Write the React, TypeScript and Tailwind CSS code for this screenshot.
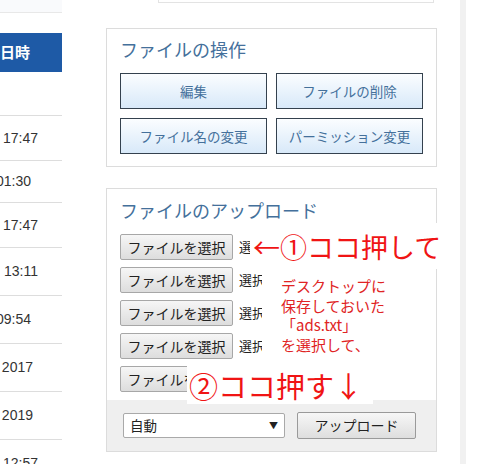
import React from 'react'

const JP = '[font-family:"Noto_Sans_CJK_JP","Liberation_Sans",sans-serif]'

const ROWS = [
  { h: 'h-[45px]', text: '2019/05/20 17:47', pr: 'pr-[24px]' },
  { h: 'h-[42px]', text: '2019/05/12 01:30', pr: 'pr-[31px]' },
  { h: 'h-[45px]', text: '2019/04/28 17:47', pr: 'pr-[24px]' },
  { h: 'h-[48px]', text: '2019/04/02 13:11', pr: 'pr-[24px]' },
  { h: 'h-[48px]', text: '2019/03/18 09:54', pr: 'pr-[31px]' },
  { h: 'h-[48px]', text: 'Dec. 2017', pr: 'pr-[29px]' },
  { h: 'h-[48px]', text: 'Jan. 2019', pr: 'pr-[29px]' },
  { h: 'h-[48px]', text: '2018/11/02 12:57', pr: 'pr-[24px]' },
]

function LeftColumn() {
  return (
    <div className="w-[62px] flex-shrink-0 overflow-hidden [font-family:'Liberation_Sans',sans-serif]">
      <div className="h-[13px] bg-[#f9fafc] border-b border-[#e8e8e8]" />
      <div className="mt-[20px] h-[39px] bg-[#1e5aa6] flex items-center justify-end pr-[32px]">
        <span className={`text-white text-[15px] font-bold whitespace-nowrap ${JP}`}>更新日時</span>
      </div>
      <div className="h-[44px] border-b border-[#dddddd]" />
      {ROWS.map((r, i) => (
        <div key={i} className={`${r.h} ${r.pr} flex items-center justify-end border-b border-[#dddddd]`}>
          <span className="text-[14px] text-[#333] whitespace-nowrap">{r.text}</span>
        </div>
      ))}
    </div>
  )
}

function OpButton({ label }: { label: string }) {
  return (
    <button className="h-[36px] border border-[#34414e] bg-gradient-to-b from-[#fbfdff] to-[#d8e9f9] text-[13.5px] text-[#44709b]">
      {label}
    </button>
  )
}

function FileRow() {
  return (
    <div className="h-[26px] w-[142px] flex items-center overflow-hidden whitespace-nowrap">
      <span className="h-[26px] w-[113px] flex-shrink-0 flex items-center justify-center border border-[#a7a7a7] rounded-[2px] bg-gradient-to-b from-[#f6f6f6] to-[#dddddd] text-[14px] text-[#222]">
        ファイルを選択
      </span>
      <span className="ml-[6px] text-[13px] text-[#222]">選択されていません</span>
    </div>
  )
}

function MainColumn() {
  return (
    <div className={`w-[331px] flex-shrink-0 ${JP}`}>
      <div className="h-[3px] ml-[52px] mr-[3px] border-b border-x border-[#e3e3e3]" />

      <div className="mt-[25px] border border-[#dcdcdc] px-[13px] pt-[9px] pb-[12px]">
        <h2 className="text-[18px] leading-[22px] text-[#44709b]">ファイルの操作</h2>
        <div className="mt-[13px] grid grid-cols-2 gap-[9px]">
          <OpButton label="編集" />
          <OpButton label="ファイルの削除" />
          <OpButton label="ファイル名の変更" />
          <OpButton label="パーミッション変更" />
        </div>
      </div>

      <div className="mt-[21px] border border-[#dcdcdc]">
        <div className="px-[13px] pt-[10px]">
          <h2 className="text-[18px] leading-[22px] text-[#44709b]">ファイルのアップロード</h2>
          <div className="mt-[13px] flex flex-col gap-[7px]">
            <FileRow />
            <FileRow />
            <FileRow />
            <FileRow />
            <FileRow />
          </div>
        </div>
        <div className="mt-[8px] h-[51px] bg-[#efefef] flex items-center pl-[16px] gap-[12px]">
          <div className="h-[25px] w-[162px] bg-white border border-[#a9a9a9] rounded-[2px] flex items-center justify-between pl-[6px] pr-[6px]">
            <span className="text-[13.5px] text-[#222]">自動</span>
            <span className="text-[9px] text-[#222]">▼</span>
          </div>
          <button className="h-[27px] w-[119px] border border-[#9a9a9a] rounded-[2px] bg-gradient-to-b from-[#f7f7f7] to-[#dedede] text-[14px] text-[#222]">
            アップロード
          </button>
        </div>
      </div>
    </div>
  )
}

export default function App() {
  return (
    <div className="relative w-[481px] h-[464px] overflow-hidden bg-white flex">
      <LeftColumn />
      <div className="w-[44px] flex-shrink-0" />
      <MainColumn />
      <div className="ml-[23px] w-[6px] bg-[#f1f1f1]" />

      <div className={`absolute left-[250px] top-[223px] w-[200px] h-[46px] bg-white flex items-center pl-[3px] text-[27px] leading-none text-[#f01414] whitespace-nowrap ${JP}`}>
        ←①ココ押して
      </div>
      <div className={`absolute left-[281px] top-[276px] text-[15px] leading-[19.5px] text-[#e02424] whitespace-pre ${JP}`}>
        {'デスクトップに\n保存しておいた\n「ads.txt」\nを選択して、'}
      </div>
      <div className={`absolute left-[187px] top-[366px] w-[186px] h-[38px] bg-white flex items-center pl-[2px] text-[29px] leading-none text-[#f01414] whitespace-nowrap ${JP}`}>
        ②ココ押す↓
      </div>
    </div>
  )
}
